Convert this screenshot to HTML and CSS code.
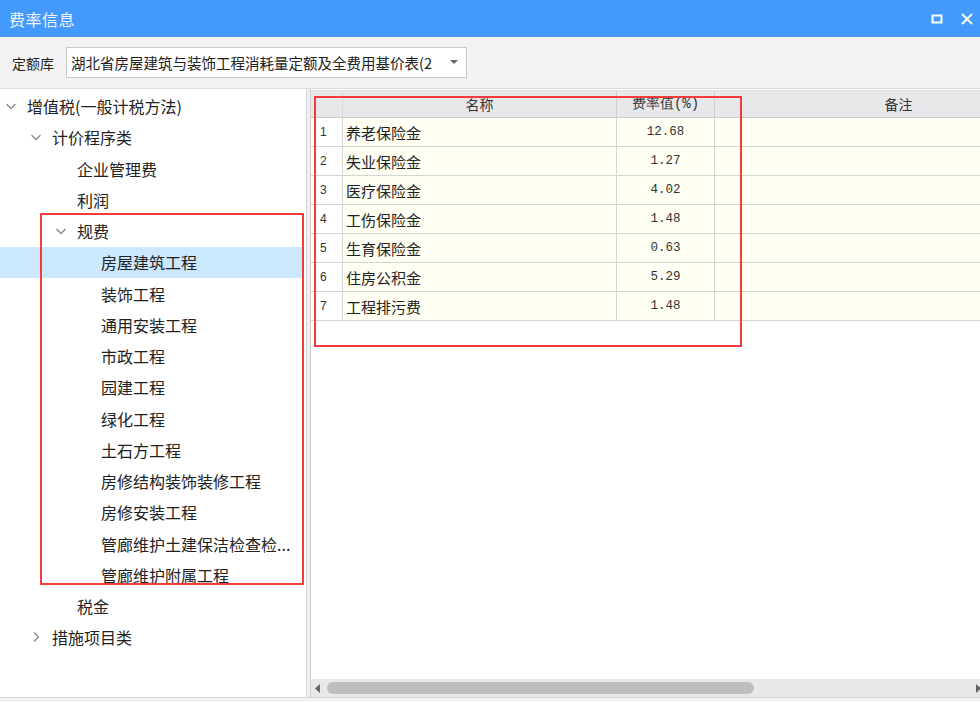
FILE: index.html
```html
<!DOCTYPE html>
<html lang="zh">
<head>
<meta charset="utf-8">
<link rel="stylesheet" href="styles.css">
</head>
<body>
<div class="win">
  <div class="titlebar">
    <span class="title">费率信息</span>
    <div class="winbtns">
      <svg class="wbtn" width="14" height="14" viewBox="0 0 14 14"><rect x="2.5" y="3.5" width="9" height="7" fill="none" stroke="#fff" stroke-width="2"/></svg>
      <svg class="wbtn" width="14" height="14" viewBox="0 0 14 14"><path d="M2 2 L12 12 M12 2 L2 12" stroke="#fff" stroke-width="2"/></svg>
    </div>
  </div>
  <div class="toolbar">
    <span class="lbl">定额库</span>
    <div class="select">
      <span class="seltext">湖北省房屋建筑与装饰工程消耗量定额及全费用基价表(2</span>
      <svg class="caret" width="8" height="5" viewBox="0 0 8 5"><path d="M0 0 L8 0 L4 4 Z" fill="#666"/></svg>
    </div>
  </div>
  <div class="main">
    <div class="left">
      <div class="tree">
        <div class="node l0"><svg class="chev" width="12" height="12" viewBox="0 0 12 12"><path d="M1.5 4 L6 8.5 L10.5 4" fill="none" stroke="#8a8a8a" stroke-width="1.3"/></svg><span>增值税(一般计税方法)</span></div>
        <div class="node l1"><svg class="chev" width="12" height="12" viewBox="0 0 12 12"><path d="M1.5 4 L6 8.5 L10.5 4" fill="none" stroke="#8a8a8a" stroke-width="1.3"/></svg><span>计价程序类</span></div>
        <div class="node l2"><span>企业管理费</span></div>
        <div class="node l2"><span>利润</span></div>
        <div class="node l2c"><svg class="chev" width="12" height="12" viewBox="0 0 12 12"><path d="M1.5 4 L6 8.5 L10.5 4" fill="none" stroke="#8a8a8a" stroke-width="1.3"/></svg><span>规费</span></div>
        <div class="node l3 sel"><span>房屋建筑工程</span></div>
        <div class="node l3"><span>装饰工程</span></div>
        <div class="node l3"><span>通用安装工程</span></div>
        <div class="node l3"><span>市政工程</span></div>
        <div class="node l3"><span>园建工程</span></div>
        <div class="node l3"><span>绿化工程</span></div>
        <div class="node l3"><span>土石方工程</span></div>
        <div class="node l3"><span>房修结构装饰装修工程</span></div>
        <div class="node l3"><span>房修安装工程</span></div>
        <div class="node l3"><span>管廊维护土建保洁检查检...</span></div>
        <div class="node l3"><span>管廊维护附属工程</span></div>
        <div class="node l2"><span>税金</span></div>
        <div class="node l1"><svg class="chev" width="12" height="12" viewBox="0 0 12 12"><path d="M4 1.5 L8.5 6 L4 10.5" fill="none" stroke="#8a8a8a" stroke-width="1.3"/></svg><span>措施项目类</span></div>
      </div>
      <div class="redbox redleft"></div>
    </div>
    <div class="split"></div>
    <div class="right">
      <div class="grid">
        <div class="row head">
          <div class="c num"></div>
          <div class="c name">名称</div>
          <div class="c rate">费率值(%)</div>
          <div class="c note">备注</div>
        </div>
        <div class="row"><div class="c num">1</div><div class="c name">养老保险金</div><div class="c rate">12.68</div><div class="c note"></div></div>
        <div class="row"><div class="c num">2</div><div class="c name">失业保险金</div><div class="c rate">1.27</div><div class="c note"></div></div>
        <div class="row"><div class="c num">3</div><div class="c name">医疗保险金</div><div class="c rate">4.02</div><div class="c note"></div></div>
        <div class="row"><div class="c num">4</div><div class="c name">工伤保险金</div><div class="c rate">1.48</div><div class="c note"></div></div>
        <div class="row"><div class="c num">5</div><div class="c name">生育保险金</div><div class="c rate">0.63</div><div class="c note"></div></div>
        <div class="row"><div class="c num">6</div><div class="c name">住房公积金</div><div class="c rate">5.29</div><div class="c note"></div></div>
        <div class="row"><div class="c num">7</div><div class="c name">工程排污费</div><div class="c rate">1.48</div><div class="c note"></div></div>
      </div>
      <div class="redbox redright"></div>
      <div class="hscroll">
        <svg class="arr" width="6" height="9" viewBox="0 0 6 9"><path d="M5 0 L0 4.5 L5 9 Z" fill="#666"/></svg>
        <div class="thumb"></div>
        <svg class="arr arr-r" width="6" height="9" viewBox="0 0 6 9"><path d="M0 0 L5 4.5 L0 9 Z" fill="#666"/></svg>
      </div>
    </div>
  </div>
  <div class="statusline"></div>
</div>
</body>
</html>
```
FILE: styles.css
```css
* { box-sizing: border-box; }
html, body { margin: 0; padding: 0; }
body {
  width: 980px;
  height: 702px;
  overflow: hidden;
  font-family: "Noto Sans CJK SC", "Noto Sans", sans-serif;
  color: #222;
  background: #fff;
}
.win { width: 980px; height: 702px; display: flex; flex-direction: column; }
.titlebar {
  height: 37px;
  background: #4499fd;
  display: flex;
  align-items: center;
  justify-content: space-between;
  padding: 0 6px 0 9px;
  flex: none;
}
.title { color: #eef5ff; font-size: 16px; letter-spacing: 0.5px; }
.winbtns { display: flex; gap: 16px; align-items: center; }
.wbtn { display: block; }
.toolbar {
  height: 52px;
  background: #f3f3f3;
  border-bottom: 1px solid #dcdcdc;
  display: flex;
  align-items: center;
  padding-left: 12px;
  flex: none;
}
.lbl { font-size: 14px; color: #222; margin-right: 12px; }
.select {
  width: 401px;
  height: 31px;
  background: #fff;
  border: 1px solid #c9c9c9;
  display: flex;
  align-items: center;
  justify-content: space-between;
  padding: 0 8px 0 4px;
}
.seltext { font-size: 14.5px; color: #222; white-space: nowrap; overflow: hidden; }
.caret { flex: none; margin-left: 4px; }
.main { flex: 1; display: flex; min-height: 0; }
.left {
  width: 307px;
  flex: none;
  border-right: 1px solid #d6d6d6;
  position: relative;
  background: #fff;
}
.tree { padding-top: 1.5px; }
.node {
  height: 31.25px;
  display: flex;
  align-items: center;
  font-size: 16px;
  color: #222;
  white-space: nowrap;
}
.node .chev { flex: none; margin-right: 10px; }
.l0 { padding-left: 5px; }
.l1 { padding-left: 30px; }
.l2 { padding-left: 77px; }
.l2c { padding-left: 55px; }
.l3 { padding-left: 101px; }
.sel { background: #cce8ff; margin-right: 4px; }
.split { width: 3px; flex: none; background: #efefef; }
.right {
  flex: 1;
  border-left: 1px solid #cfcfcf;
  position: relative;
  display: flex;
  flex-direction: column;
  min-width: 0;
  overflow: hidden;
}
.grid { flex: 1; padding-top: 1px; }
.row { display: flex; height: 29px; border-bottom: 1px solid #d4d4d4; }
.row .c {
  border-right: 1px solid #d4d4d4;
  display: flex;
  align-items: center;
  flex: none;
}
.num { width: 32px; padding-left: 9px; font-size: 12px; font-family: "Liberation Sans", sans-serif; color: #333; background: #fff; }
.name { width: 274px; padding-left: 3px; font-size: 15px; color: #222; background: #fffff3; }
.rate { width: 98px; justify-content: center; font-family: "Liberation Mono", monospace; font-size: 12.5px; color: #333; background: #fffff3; }
.note { width: 300px; background: #fffff3; }
.row.head { height: 28px; background: #e8e8eb; border-bottom: 1px solid #cdcdcd; border-top: 1px solid #e0e0e0; }
.row.head .c { background: #e8e8eb; justify-content: center; padding: 0; font-size: 14px; color: #333; border-right-color: #d0d0d0; }
.row.head .note { width: 368px; }
.row.head .num { border-right-color: #d9d9d9; }
.hscroll {
  height: 18px;
  background: #e8e8e8;
  flex: none;
  display: flex;
  align-items: center;
  padding-left: 4px;
  position: relative;
}
.arr { flex: none; }
.thumb {
  width: 427px;
  height: 12px;
  background: #bebebe;
  border-radius: 6px;
  margin-left: 6px;
}
.arr-r { margin-left: auto; margin-right: -2px; }
.statusline { height: 5px; flex: none; background: #f3f3f3; border-top: 1px solid #d6d6d6; }
.redbox { position: absolute; border: 2px solid #f43b3b; pointer-events: none; }
.redleft { left: 40px; top: 124px; width: 264px; height: 372px; }
.redright { left: 3px; top: 7px; width: 428px; height: 251px; }
```
